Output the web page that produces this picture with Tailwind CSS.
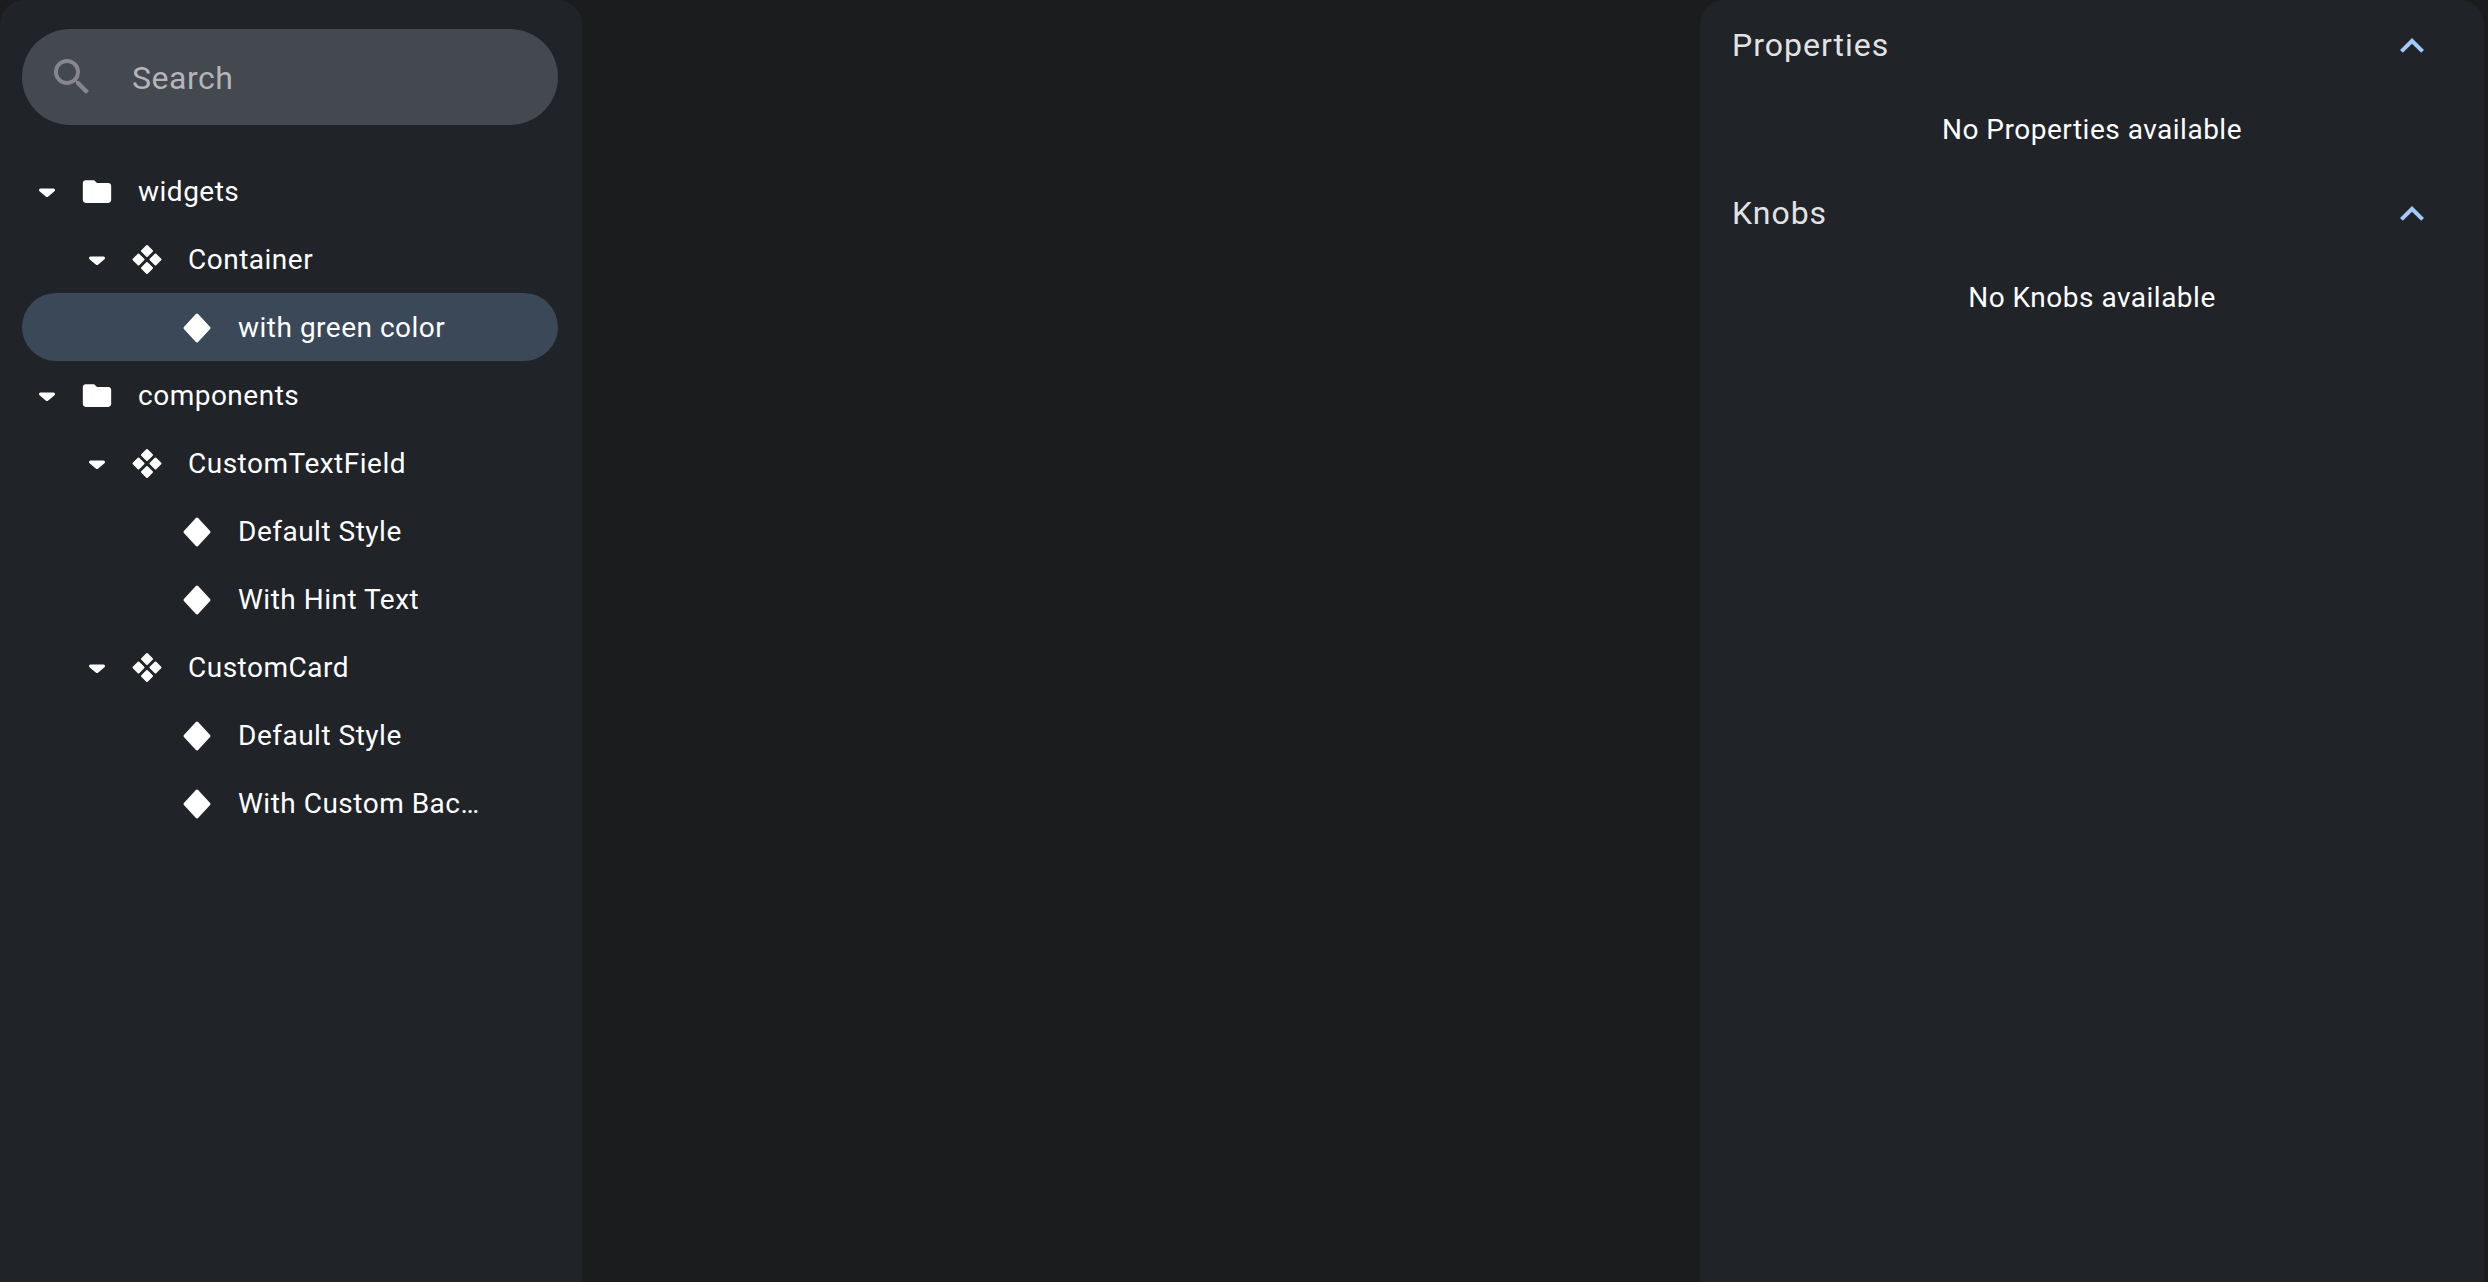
<!DOCTYPE html>
<html lang="en">
<head>
  <meta charset="UTF-8">
  <title>Widgetbook</title>
  <script src="https://cdn.jsdelivr.net/npm/@tailwindcss/browser@4"></script>
</head>
<body class="bg-[#1a1c1e] h-screen overflow-hidden font-['Roboto',sans-serif] text-white">
  <div class="flex h-full justify-between pr-[4px]">

    <!-- Navigation -->
    <aside class="w-[582px] h-full bg-[#202327] rounded-t-[24px] pl-[22px] pr-[24px] pt-[29px]">
      <div class="h-[96px] rounded-full bg-[#44484f] flex items-center pl-[26px]">
        <svg class="w-[48px] h-[48px] text-[#85878c]" viewBox="0 0 24 24" fill="currentColor"><path d="M15.5 14h-.79l-.28-.27A6.47 6.47 0 0 0 16 9.5 6.5 6.5 0 1 0 9.5 16c1.61 0 3.09-.59 4.23-1.57l.27.28v.79l5 4.99L20.49 19l-4.99-5zm-6 0C7.01 14 5 11.99 5 9.5S7.01 5 9.5 5 14 7.01 14 9.5 11.99 14 9.5 14z"/></svg>
        <span class="ml-[36px] pt-[1px] text-[32px] text-[#b4b5b8] tracking-[0.5px]">Search</span>
      </div>

      <ul class="mt-[32px] text-[28px] tracking-[0.5px]">
        <li class="h-[68px] flex items-center pl-[8px]">
          <svg class="w-[34px] h-[34px]" viewBox="0 0 34 34" fill="currentColor" stroke="currentColor" stroke-width="3" stroke-linejoin="round"><path d="M10.5 16h13L17 21.500z"/></svg>
          <svg class="ml-[16px] w-[34px] h-[34px]" viewBox="0 -0.4 24 24" fill="currentColor"><path d="M10 4H4c-1.100 0-2 .9-2 2v12c0 1.100.9 2 2 2h16c1.100 0 2-.9 2-2V8c0-1.100-.9-2-2-2h-8l-2-2z"/></svg>
          <span class="ml-[24px] pt-[2px]">widgets</span>
        </li>
        <li class="h-[68px] flex items-center pl-[58px]">
          <svg class="w-[34px] h-[34px]" viewBox="0 0 34 34" fill="currentColor" stroke="currentColor" stroke-width="3" stroke-linejoin="round"><path d="M10.5 16h13L17 21.500z"/></svg>
          <svg class="ml-[16px] w-[34px] h-[34px]" viewBox="0 0 34 34" fill="currentColor" stroke="currentColor" stroke-width="2" stroke-linejoin="round"><path d="M17 4l5 5-5 5-5-5zM8.500 12.500l5 5-5 5-5-5zM25.500 12.500l5 5-5 5-5-5zM17 21l5 5-5 5-5-5z"/></svg>
          <span class="ml-[24px] pt-[2px]">Container</span>
        </li>
        <li class="h-[68px] flex items-center pl-[158px] rounded-full bg-[#3b4858]">
          <svg class="w-[34px] h-[34px]" viewBox="0 0 34 34" fill="currentColor" stroke="currentColor" stroke-width="3" stroke-linejoin="round"><path d="M17 5L29 18 17 31 5 18z"/></svg>
          <span class="ml-[24px] pt-[2px]">with green color</span>
        </li>
        <li class="h-[68px] flex items-center pl-[8px]">
          <svg class="w-[34px] h-[34px]" viewBox="0 0 34 34" fill="currentColor" stroke="currentColor" stroke-width="3" stroke-linejoin="round"><path d="M10.5 16h13L17 21.500z"/></svg>
          <svg class="ml-[16px] w-[34px] h-[34px]" viewBox="0 -0.4 24 24" fill="currentColor"><path d="M10 4H4c-1.100 0-2 .9-2 2v12c0 1.100.9 2 2 2h16c1.100 0 2-.9 2-2V8c0-1.100-.9-2-2-2h-8l-2-2z"/></svg>
          <span class="ml-[24px] pt-[2px]">components</span>
        </li>
        <li class="h-[68px] flex items-center pl-[58px]">
          <svg class="w-[34px] h-[34px]" viewBox="0 0 34 34" fill="currentColor" stroke="currentColor" stroke-width="3" stroke-linejoin="round"><path d="M10.5 16h13L17 21.500z"/></svg>
          <svg class="ml-[16px] w-[34px] h-[34px]" viewBox="0 0 34 34" fill="currentColor" stroke="currentColor" stroke-width="2" stroke-linejoin="round"><path d="M17 4l5 5-5 5-5-5zM8.500 12.500l5 5-5 5-5-5zM25.500 12.500l5 5-5 5-5-5zM17 21l5 5-5 5-5-5z"/></svg>
          <span class="ml-[24px] pt-[2px]">CustomTextField</span>
        </li>
        <li class="h-[68px] flex items-center pl-[158px]">
          <svg class="w-[34px] h-[34px]" viewBox="0 0 34 34" fill="currentColor" stroke="currentColor" stroke-width="3" stroke-linejoin="round"><path d="M17 5L29 18 17 31 5 18z"/></svg>
          <span class="ml-[24px] pt-[2px]">Default Style</span>
        </li>
        <li class="h-[68px] flex items-center pl-[158px]">
          <svg class="w-[34px] h-[34px]" viewBox="0 0 34 34" fill="currentColor" stroke="currentColor" stroke-width="3" stroke-linejoin="round"><path d="M17 5L29 18 17 31 5 18z"/></svg>
          <span class="ml-[24px] pt-[2px]">With Hint Text</span>
        </li>
        <li class="h-[68px] flex items-center pl-[58px]">
          <svg class="w-[34px] h-[34px]" viewBox="0 0 34 34" fill="currentColor" stroke="currentColor" stroke-width="3" stroke-linejoin="round"><path d="M10.5 16h13L17 21.500z"/></svg>
          <svg class="ml-[16px] w-[34px] h-[34px]" viewBox="0 0 34 34" fill="currentColor" stroke="currentColor" stroke-width="2" stroke-linejoin="round"><path d="M17 4l5 5-5 5-5-5zM8.500 12.500l5 5-5 5-5-5zM25.500 12.500l5 5-5 5-5-5zM17 21l5 5-5 5-5-5z"/></svg>
          <span class="ml-[24px] pt-[2px]">CustomCard</span>
        </li>
        <li class="h-[68px] flex items-center pl-[158px]">
          <svg class="w-[34px] h-[34px]" viewBox="0 0 34 34" fill="currentColor" stroke="currentColor" stroke-width="3" stroke-linejoin="round"><path d="M17 5L29 18 17 31 5 18z"/></svg>
          <span class="ml-[24px] pt-[2px]">Default Style</span>
        </li>
        <li class="h-[68px] flex items-center pl-[158px]">
          <svg class="w-[34px] h-[34px]" viewBox="0 0 34 34" fill="currentColor" stroke="currentColor" stroke-width="3" stroke-linejoin="round"><path d="M17 5L29 18 17 31 5 18z"/></svg>
          <span class="ml-[24px] pt-[2px]">With Custom Bac…</span>
        </li>
      </ul>
    </aside>

    <!-- Settings -->
    <aside class="w-[784px] h-full bg-[#202327] rounded-t-[24px] px-[32px]">
      <section>
        <div class="h-[88px] flex items-center justify-between pr-[16px]">
          <h2 class="text-[32px] pt-[1px] text-[#e2e2e5] tracking-[1px]">Properties</h2>
          <svg class="w-[48px] h-[48px] mt-[3px] text-[#a3c9ff]" viewBox="0 0 24 24" fill="currentColor"><path d="M12 8l-6 6 1.410 1.410L12 10.830l4.590 4.580L18 14z"/></svg>
        </div>
        <p class="h-[80px] pt-[4px] flex items-center justify-center text-[28px] tracking-[0.5px]">No Properties available</p>
      </section>
      <section>
        <div class="h-[88px] flex items-center justify-between pr-[16px]">
          <h2 class="text-[32px] pt-[1px] text-[#e2e2e5] tracking-[1px]">Knobs</h2>
          <svg class="w-[48px] h-[48px] mt-[3px] text-[#a3c9ff]" viewBox="0 0 24 24" fill="currentColor"><path d="M12 8l-6 6 1.410 1.410L12 10.830l4.590 4.580L18 14z"/></svg>
        </div>
        <p class="h-[80px] pt-[4px] flex items-center justify-center text-[28px] tracking-[0.5px]">No Knobs available</p>
      </section>
    </aside>
  </div>
</body>
</html>
